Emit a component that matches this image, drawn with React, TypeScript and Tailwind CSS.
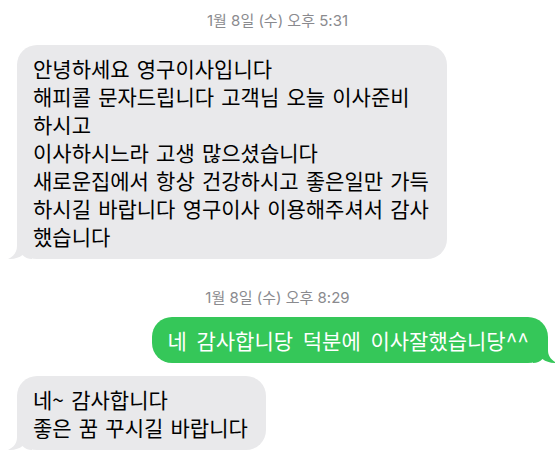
import React from "react";

const hangul = '"Noto Sans CJK KR", sans-serif';

function Timestamp({ time }: { time: string }) {
  return (
    <div
      className="flex h-5 items-center justify-center text-[15px] leading-5 text-[#8a8a8e]"
      style={{ fontFamily: `Inter, ${hangul}` }}
    >
      1월 8일 (수) 오후 {time}
    </div>
  );
}

function Tail({ side, color }: { side: "left" | "right"; color: string }) {
  const left = side === "left";
  return (
    <svg
      width="24"
      height="22"
      viewBox="0 0 24 22"
      className={left ? "absolute -left-[9px] bottom-0" : "absolute -right-[9px] bottom-0 -scale-x-100"}
    >
      <path d="M9 0 V9 C9 15 6 19 0 22 C6 22.2 11 20.8 14.5 18 C17 20.5 20 22 24 22 V0 Z" fill={color} />
    </svg>
  );
}

function Received({ lines }: { lines: string[] }) {
  return (
    <div className="relative ml-[17px] w-fit rounded-[20px] bg-[#e9e9eb] py-[9px] pl-4 pr-[18px]">
      <Tail side="left" color="#e9e9eb" />
      <div
        className="relative text-[21px] leading-[28px] [word-spacing:2.5px] text-black"
        style={{ fontFamily: hangul }}
      >
        {lines.map((l) => (
          <div key={l} className="whitespace-nowrap">
            {l}
          </div>
        ))}
      </div>
    </div>
  );
}

export default function App() {
  return (
    <div className="h-[460px] w-[555px] overflow-hidden bg-white pt-[11px]">
      <Timestamp time="5:31" />

      <div className="mt-[14px]">
        <Received
          lines={[
            "안녕하세요 영구이사입니다",
            "해피콜 문자드립니다 고객님 오늘 이사준비",
            "하시고",
            "이사하시느라 고생 많으셨습니다",
            "새로운집에서 항상 건강하시고 좋은일만 가득",
            "하시길 바랍니다 영구이사 이용해주셔서 감사",
            "했습니다",
          ]}
        />
      </div>

      <div className="mt-[29px]">
        <Timestamp time="8:29" />
      </div>

      <div className="mt-[9px] flex justify-end pr-[7px]">
        <div className="relative rounded-[20px] bg-[#35c759] py-[9px] pl-[15px] pr-[19px]">
          <Tail side="right" color="#35c759" />
          <div
            className="relative whitespace-nowrap text-[21px] leading-[28px] [word-spacing:5px] text-white"
            style={{ fontFamily: hangul }}
          >
            네 감사합니당 덕분에 이사잘했습니당^^
          </div>
        </div>
      </div>

      <div className="mt-[13px]">
        <Received lines={["네~ 감사합니다", "좋은 꿈 꾸시길 바랍니다"]} />
      </div>
    </div>
  );
}
